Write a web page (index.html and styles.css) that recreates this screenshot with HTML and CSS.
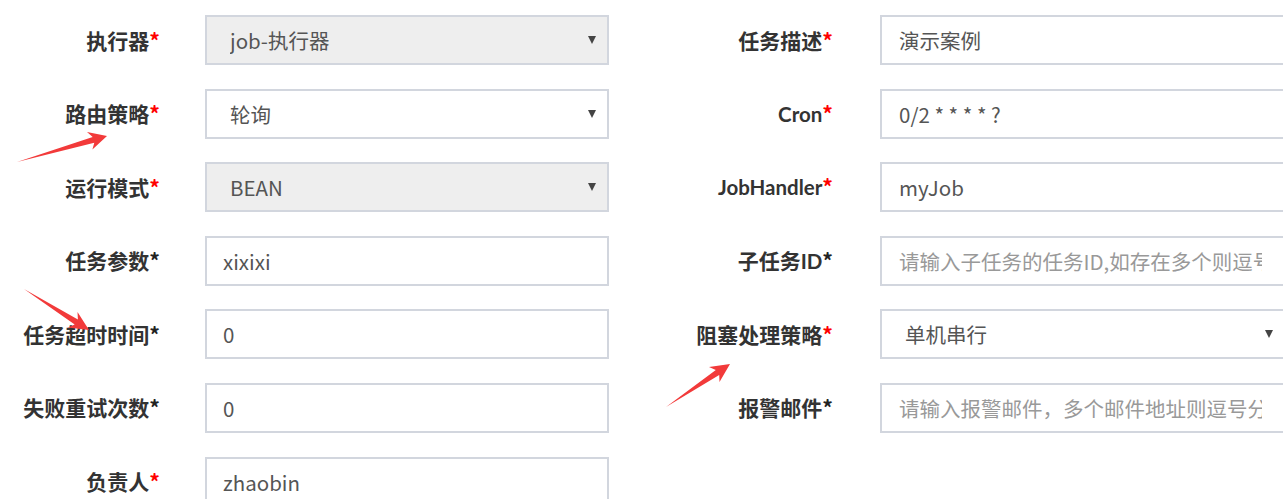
FILE: index.html
```html
<!DOCTYPE html>
<html lang="zh-CN">
<head>
<meta charset="utf-8">
<title>任务编辑</title>
<link rel="stylesheet" href="styles.css">
</head>
<body>
<div class="form">
  <div class="row">
    <div class="label">执行器<span class="req">*</span></div>
    <div class="field select disabled"><span class="val">job-执行器</span><i class="caret"></i></div>
    <div class="label r">任务描述<span class="req">*</span></div>
    <div class="field wide"><span class="val">演示案例</span></div>
  </div>
  <div class="row">
    <div class="label">路由策略<span class="req">*</span></div>
    <div class="field select"><span class="val">轮询</span><i class="caret"></i></div>
    <div class="label r"><span class="lat">Cron</span><span class="req">*</span></div>
    <div class="field wide"><span class="val">0/2 * * * * ?</span></div>
  </div>
  <div class="row">
    <div class="label">运行模式<span class="req">*</span></div>
    <div class="field select disabled"><span class="val">BEAN</span><i class="caret"></i></div>
    <div class="label r"><span class="lat">JobHandler</span><span class="req">*</span></div>
    <div class="field wide"><span class="val">myJob</span></div>
  </div>
  <div class="row">
    <div class="label">任务参数<span class="opt">*</span></div>
    <div class="field"><span class="val">xixixi</span></div>
    <div class="label r">子任务<span class="lat">ID</span><span class="opt">*</span></div>
    <div class="field wide"><span class="val ph">请输入子任务的任务ID,如存在多个则逗号分隔</span></div>
  </div>
  <div class="row">
    <div class="label">任务超时时间<span class="opt">*</span></div>
    <div class="field"><span class="val">0</span></div>
    <div class="label r">阻塞处理策略<span class="req">*</span></div>
    <div class="field wide select"><span class="val">单机串行</span><i class="caret"></i></div>
  </div>
  <div class="row">
    <div class="label">失败重试次数<span class="opt">*</span></div>
    <div class="field"><span class="val">0</span></div>
    <div class="label r">报警邮件<span class="opt">*</span></div>
    <div class="field wide"><span class="val ph">请输入报警邮件，多个邮件地址则逗号分隔</span></div>
  </div>
  <div class="row">
    <div class="label">负责人<span class="req">*</span></div>
    <div class="field"><span class="val">zhaobin</span></div>
  </div>
</div>
<svg class="marks" width="1283" height="499" viewBox="0 0 1283 499" aria-hidden="true">
  <polygon points="17,162 92.7,137 87,132 107,136 92.4,149.5 94.3,142.8"/>
  <polygon points="24,289 77.9,319.5 77.5,312 89,330 67.8,327.5 74.7,324.5"/>
  <polygon points="666,407 715.8,369.9 709,367 730,364 719.5,382 719.2,374.9"/>
</svg>
</body>
</html>
```
FILE: styles.css
```css
html, body {
  margin: 0;
  padding: 0;
  background: #fff;
  overflow: hidden;
}
body {
  position: relative;
  width: 1283px;
  height: 499px;
  font-family: "Noto Sans CJK SC", "Noto Sans", sans-serif;
}
.form {
  display: flex;
  flex-direction: column;
  gap: 23.6px;
  padding-top: 15px;
}
.row {
  display: grid;
  grid-template-columns: 205px 404px 271px 406px;
  align-items: center;
}
.label {
  text-align: right;
  padding-right: 45px;
  font-size: 21px;
  font-weight: 700;
  color: #333;
  white-space: nowrap;
  line-height: 1;
}
.label.r {
  padding-right: 47px;
}
.lat {
  font-family: Lato, "Noto Sans CJK SC", sans-serif;
  font-size: 20.5px;
}
.req {
  color: #f00;
}
.opt {
  color: #222;
}
.field {
  position: relative;
  box-sizing: border-box;
  height: 50px;
  border: 2px solid #d2d6de;
  background: #fff;
  display: flex;
  align-items: center;
  padding: 0 16px;
  font-size: 20.5px;
  color: #555;
}
.field.wide {
  padding-left: 17px;
  padding-right: 22px;
}
.field.select {
  padding-left: 23px;
}
.field.disabled {
  background: #eee;
}
.val {
  flex: 1;
  min-width: 0;
  overflow: hidden;
  white-space: nowrap;
}
.ph {
  color: #999;
}
.caret {
  position: absolute;
  right: 11px;
  top: 50%;
  margin-top: -4px;
  width: 0;
  height: 0;
  border-left: 4px solid transparent;
  border-right: 4px solid transparent;
  border-top: 8px solid #444;
}
.marks {
  position: absolute;
  left: 0;
  top: 0;
  pointer-events: none;
}
.marks polygon {
  fill: #f23a3a;
}
```
